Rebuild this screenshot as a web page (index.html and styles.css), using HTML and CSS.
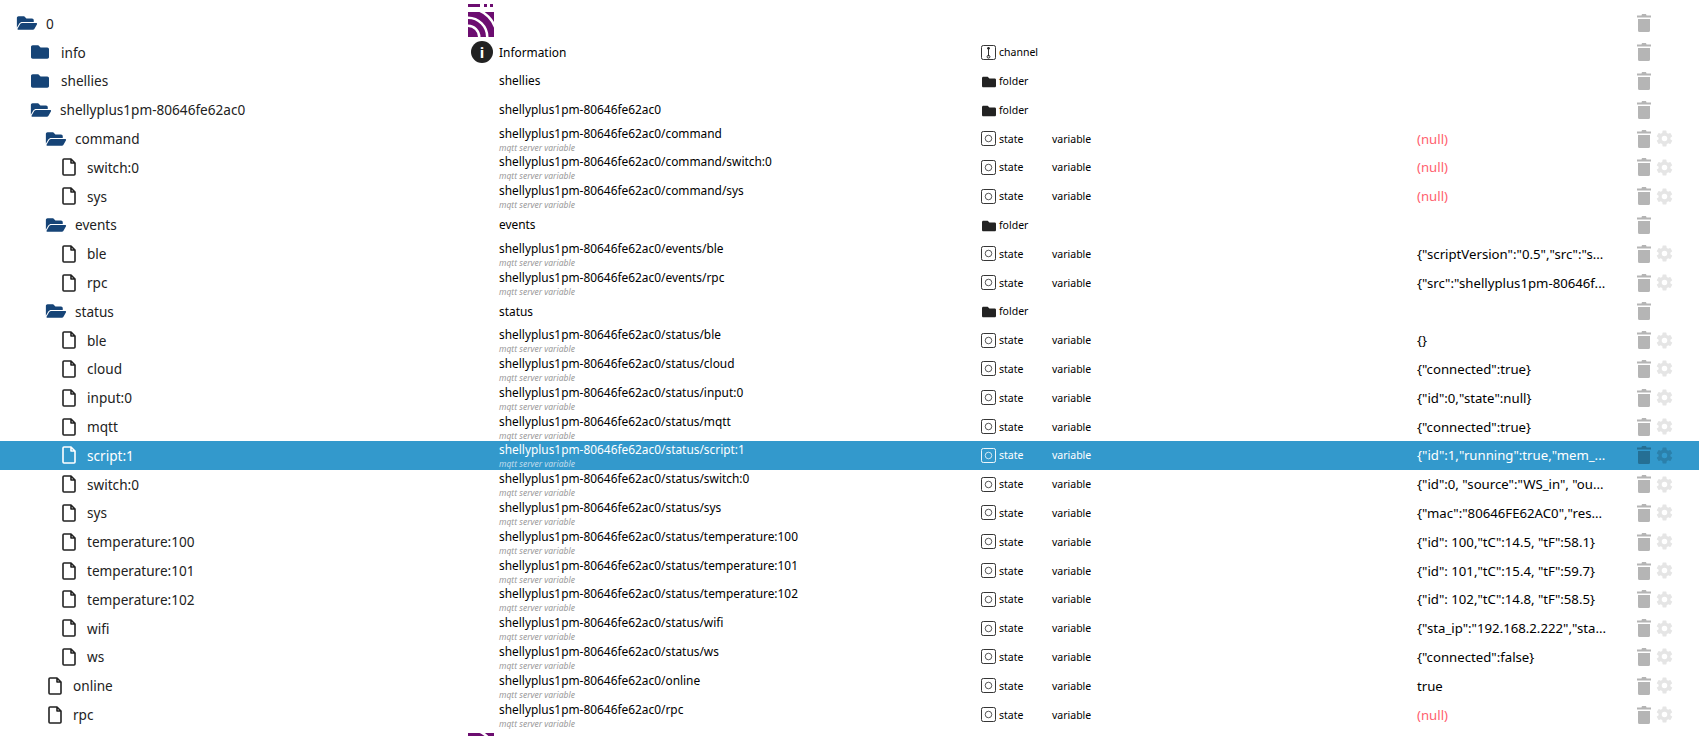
FILE: index.html
```html
<!DOCTYPE html>
<html lang="en">

<head>
    <meta charset="UTF-8">
    <meta name="viewport" content="width=device-width, initial-scale=1.0">
    <title>Objects</title>
    <link rel="stylesheet" href="styles.css">
</head>

<body>
    <svg class="defs" width="0" height="0">
        <symbol id="i-open" viewBox="0 0 576 512"><path d="M572.7 292.1l-72.4 124.1c-10.500 18-33.200 31.800-56.300 31.800H44c-20 0-32.200-21.700-22.100-39l72.400-124.100C105 266.900 127.700 256 150.800 256H548c20 0 34.800 18.800 24.700 36.100zM150.800 224H480v-48c0-26.500-21.500-48-48-48H272l-64-64H48C21.500 64 0 85.500 0 112v278l69-118.300C86.100 242.300 117.200 224 150.800 224z"/></symbol>
        <symbol id="i-closed" viewBox="0 0 512 512"><path d="M464 128H272l-64-64H48C21.500 64 0 85.500 0 112v288c0 26.500 21.500 48 48 48h416c26.500 0 48-21.500 48-48V176c0-26.500-21.500-48-48-48z"/></symbol>
        <symbol id="i-file" viewBox="0 0 14 18"><path d="M2 1h7l4 4v11a1 1 0 0 1-1 1H2a1 1 0 0 1-1-1V2a1 1 0 0 1 1-1zM9 1v4h4" fill="none" stroke="currentColor" stroke-width="1.600" stroke-linejoin="round"/></symbol>
        <symbol id="i-trash" viewBox="0 0 14 18"><path d="M5 0h4l.5 1.500H14v2H0v-2h4.500zM1 5h12v11.500a1.500 1.500 0 0 1-1.500 1.500h-9A1.500 1.500 0 0 1 1 16.500z"/></symbol>
        <symbol id="i-gear" viewBox="0 0 24 24"><path fill-rule="evenodd" d="M19.400 13c.04-.33.06-.66.06-1s-.02-.67-.06-1l2.100-1.650a.5.500 0 0 0 .12-.64l-2-3.460a.5.500 0 0 0-.61-.22l-2.490 1a7.300 7.300 0 0 0-1.690-.98l-.38-2.650A.49.490 0 0 0 14 2h-4a.49.490 0 0 0-.49.420l-.38 2.650c-.61.250-1.170.590-1.690.980l-2.490-1a.5.500 0 0 0-.61.220l-2 3.460a.5.500 0 0 0 .12.640L4.560 11c-.04.330-.06.670-.06 1s.02.670.06 1l-2.100 1.650a.5.500 0 0 0-.12.640l2 3.460c.12.220.39.300.61.220l2.490-1c.52.400 1.080.730 1.690.980l.38 2.650c.04.240.25.420.49.420h4c.24 0 .45-.18.49-.42l.38-2.650c.61-.25 1.170-.59 1.690-.98l2.490 1c.22.080.49 0 .61-.22l2-3.460a.5.500 0 0 0-.12-.64zM12 15.500a3.500 3.500 0 1 1 0-7 3.500 3.500 0 0 1 0 7z"/></symbol>
        <symbol id="i-state" viewBox="0 0 16 16"><rect x="0.500" y="0.500" width="15" height="15" rx="2" fill="none" stroke="currentColor"/><circle cx="8" cy="8" r="3.500" fill="none" stroke="currentColor" opacity="0.800"/></symbol>
        <symbol id="i-channel" viewBox="0 0 16 16"><rect x="0.500" y="0.500" width="15" height="15" rx="2" fill="none" stroke="currentColor"/><path d="M8 3v9" stroke="currentColor"/><circle cx="8" cy="3.500" r="1.400"/><circle cx="8" cy="12.500" r="1.500" fill="none" stroke="currentColor"/></symbol>
        <symbol id="i-rf" viewBox="0 0 26 34">
            <path d="M0 0h12v3H0zM16 0h3v3h-3zM22 0h3v3h-3z"/>
            <path d="M0 8h26v25H0z"/>
            <path d="M0 21.750A11.250 11.250 0 0 1 11.250 33M0 13.750A19.250 19.250 0 0 1 19.250 33M0 4.250A28.750 28.750 0 0 1 28.750 33" fill="none" stroke="#fff" stroke-width="2.500"/>
        </symbol>
    </svg>

    <div class="tree">
        <div class="row first">
            <div class="name d0"><svg class="folder open"><use href="#i-open"/></svg>0</div>
            <div class="logo"><svg class="rf"><use href="#i-rf"/></svg></div>
            <div class="title"></div>
            <div class="kind"></div>
            <div class="role"></div>
            <div class="value"></div>
            <div class="tools"><svg class="trash"><use href="#i-trash"/></svg></div>
        </div>
        <div class="row">
            <div class="name d1"><svg class="folder"><use href="#i-closed"/></svg>info</div>
            <div class="logo"><span class="info">i</span></div>
            <div class="title">Information</div>
            <div class="kind"><svg class="type"><use href="#i-channel"/></svg>channel</div>
            <div class="role"></div>
            <div class="value"></div>
            <div class="tools"><svg class="trash"><use href="#i-trash"/></svg></div>
        </div>
        <div class="row">
            <div class="name d1"><svg class="folder"><use href="#i-closed"/></svg>shellies</div>
            <div class="logo"></div>
            <div class="title">shellies</div>
            <div class="kind"><svg class="type-folder"><use href="#i-closed"/></svg>folder</div>
            <div class="role"></div>
            <div class="value"></div>
            <div class="tools"><svg class="trash"><use href="#i-trash"/></svg></div>
        </div>
        <div class="row">
            <div class="name d1"><svg class="folder open"><use href="#i-open"/></svg>shellyplus1pm-80646fe62ac0</div>
            <div class="logo"></div>
            <div class="title">shellyplus1pm-80646fe62ac0</div>
            <div class="kind"><svg class="type-folder"><use href="#i-closed"/></svg>folder</div>
            <div class="role"></div>
            <div class="value"></div>
            <div class="tools"><svg class="trash"><use href="#i-trash"/></svg></div>
        </div>
        <div class="row">
            <div class="name d2"><svg class="folder open"><use href="#i-open"/></svg>command</div>
            <div class="logo"></div>
            <div class="title">shellyplus1pm-80646fe62ac0/command<small>mqtt server variable</small></div>
            <div class="kind"><svg class="type"><use href="#i-state"/></svg>state</div>
            <div class="role">variable</div>
            <div class="value null">(null)</div>
            <div class="tools"><svg class="trash"><use href="#i-trash"/></svg><svg class="gear"><use href="#i-gear"/></svg></div>
        </div>
        <div class="row">
            <div class="name d3"><svg class="file"><use href="#i-file"/></svg>switch:0</div>
            <div class="logo"></div>
            <div class="title">shellyplus1pm-80646fe62ac0/command/switch:0<small>mqtt server variable</small></div>
            <div class="kind"><svg class="type"><use href="#i-state"/></svg>state</div>
            <div class="role">variable</div>
            <div class="value null">(null)</div>
            <div class="tools"><svg class="trash"><use href="#i-trash"/></svg><svg class="gear"><use href="#i-gear"/></svg></div>
        </div>
        <div class="row">
            <div class="name d3"><svg class="file"><use href="#i-file"/></svg>sys</div>
            <div class="logo"></div>
            <div class="title">shellyplus1pm-80646fe62ac0/command/sys<small>mqtt server variable</small></div>
            <div class="kind"><svg class="type"><use href="#i-state"/></svg>state</div>
            <div class="role">variable</div>
            <div class="value null">(null)</div>
            <div class="tools"><svg class="trash"><use href="#i-trash"/></svg><svg class="gear"><use href="#i-gear"/></svg></div>
        </div>
        <div class="row">
            <div class="name d2"><svg class="folder open"><use href="#i-open"/></svg>events</div>
            <div class="logo"></div>
            <div class="title">events</div>
            <div class="kind"><svg class="type-folder"><use href="#i-closed"/></svg>folder</div>
            <div class="role"></div>
            <div class="value"></div>
            <div class="tools"><svg class="trash"><use href="#i-trash"/></svg></div>
        </div>
        <div class="row">
            <div class="name d3"><svg class="file"><use href="#i-file"/></svg>ble</div>
            <div class="logo"></div>
            <div class="title">shellyplus1pm-80646fe62ac0/events/ble<small>mqtt server variable</small></div>
            <div class="kind"><svg class="type"><use href="#i-state"/></svg>state</div>
            <div class="role">variable</div>
            <div class="value">{"scriptVersion":"0.5","src":"s...</div>
            <div class="tools"><svg class="trash"><use href="#i-trash"/></svg><svg class="gear"><use href="#i-gear"/></svg></div>
        </div>
        <div class="row">
            <div class="name d3"><svg class="file"><use href="#i-file"/></svg>rpc</div>
            <div class="logo"></div>
            <div class="title">shellyplus1pm-80646fe62ac0/events/rpc<small>mqtt server variable</small></div>
            <div class="kind"><svg class="type"><use href="#i-state"/></svg>state</div>
            <div class="role">variable</div>
            <div class="value">{"src":"shellyplus1pm-80646f...</div>
            <div class="tools"><svg class="trash"><use href="#i-trash"/></svg><svg class="gear"><use href="#i-gear"/></svg></div>
        </div>
        <div class="row">
            <div class="name d2"><svg class="folder open"><use href="#i-open"/></svg>status</div>
            <div class="logo"></div>
            <div class="title">status</div>
            <div class="kind"><svg class="type-folder"><use href="#i-closed"/></svg>folder</div>
            <div class="role"></div>
            <div class="value"></div>
            <div class="tools"><svg class="trash"><use href="#i-trash"/></svg></div>
        </div>
        <div class="row">
            <div class="name d3"><svg class="file"><use href="#i-file"/></svg>ble</div>
            <div class="logo"></div>
            <div class="title">shellyplus1pm-80646fe62ac0/status/ble<small>mqtt server variable</small></div>
            <div class="kind"><svg class="type"><use href="#i-state"/></svg>state</div>
            <div class="role">variable</div>
            <div class="value">{}</div>
            <div class="tools"><svg class="trash"><use href="#i-trash"/></svg><svg class="gear"><use href="#i-gear"/></svg></div>
        </div>
        <div class="row">
            <div class="name d3"><svg class="file"><use href="#i-file"/></svg>cloud</div>
            <div class="logo"></div>
            <div class="title">shellyplus1pm-80646fe62ac0/status/cloud<small>mqtt server variable</small></div>
            <div class="kind"><svg class="type"><use href="#i-state"/></svg>state</div>
            <div class="role">variable</div>
            <div class="value">{"connected":true}</div>
            <div class="tools"><svg class="trash"><use href="#i-trash"/></svg><svg class="gear"><use href="#i-gear"/></svg></div>
        </div>
        <div class="row">
            <div class="name d3"><svg class="file"><use href="#i-file"/></svg>input:0</div>
            <div class="logo"></div>
            <div class="title">shellyplus1pm-80646fe62ac0/status/input:0<small>mqtt server variable</small></div>
            <div class="kind"><svg class="type"><use href="#i-state"/></svg>state</div>
            <div class="role">variable</div>
            <div class="value">{"id":0,"state":null}</div>
            <div class="tools"><svg class="trash"><use href="#i-trash"/></svg><svg class="gear"><use href="#i-gear"/></svg></div>
        </div>
        <div class="row">
            <div class="name d3"><svg class="file"><use href="#i-file"/></svg>mqtt</div>
            <div class="logo"></div>
            <div class="title">shellyplus1pm-80646fe62ac0/status/mqtt<small>mqtt server variable</small></div>
            <div class="kind"><svg class="type"><use href="#i-state"/></svg>state</div>
            <div class="role">variable</div>
            <div class="value">{"connected":true}</div>
            <div class="tools"><svg class="trash"><use href="#i-trash"/></svg><svg class="gear"><use href="#i-gear"/></svg></div>
        </div>
        <div class="row selected">
            <div class="name d3"><svg class="file"><use href="#i-file"/></svg>script:1</div>
            <div class="logo"></div>
            <div class="title">shellyplus1pm-80646fe62ac0/status/script:1<small>mqtt server variable</small></div>
            <div class="kind"><svg class="type"><use href="#i-state"/></svg>state</div>
            <div class="role">variable</div>
            <div class="value">{"id":1,"running":true,"mem_...</div>
            <div class="tools"><svg class="trash"><use href="#i-trash"/></svg><svg class="gear"><use href="#i-gear"/></svg></div>
        </div>
        <div class="row">
            <div class="name d3"><svg class="file"><use href="#i-file"/></svg>switch:0</div>
            <div class="logo"></div>
            <div class="title">shellyplus1pm-80646fe62ac0/status/switch:0<small>mqtt server variable</small></div>
            <div class="kind"><svg class="type"><use href="#i-state"/></svg>state</div>
            <div class="role">variable</div>
            <div class="value">{"id":0, "source":"WS_in", "ou...</div>
            <div class="tools"><svg class="trash"><use href="#i-trash"/></svg><svg class="gear"><use href="#i-gear"/></svg></div>
        </div>
        <div class="row">
            <div class="name d3"><svg class="file"><use href="#i-file"/></svg>sys</div>
            <div class="logo"></div>
            <div class="title">shellyplus1pm-80646fe62ac0/status/sys<small>mqtt server variable</small></div>
            <div class="kind"><svg class="type"><use href="#i-state"/></svg>state</div>
            <div class="role">variable</div>
            <div class="value">{"mac":"80646FE62AC0","res...</div>
            <div class="tools"><svg class="trash"><use href="#i-trash"/></svg><svg class="gear"><use href="#i-gear"/></svg></div>
        </div>
        <div class="row">
            <div class="name d3"><svg class="file"><use href="#i-file"/></svg>temperature:100</div>
            <div class="logo"></div>
            <div class="title">shellyplus1pm-80646fe62ac0/status/temperature:100<small>mqtt server variable</small></div>
            <div class="kind"><svg class="type"><use href="#i-state"/></svg>state</div>
            <div class="role">variable</div>
            <div class="value">{"id": 100,"tC":14.5, "tF":58.1}</div>
            <div class="tools"><svg class="trash"><use href="#i-trash"/></svg><svg class="gear"><use href="#i-gear"/></svg></div>
        </div>
        <div class="row">
            <div class="name d3"><svg class="file"><use href="#i-file"/></svg>temperature:101</div>
            <div class="logo"></div>
            <div class="title">shellyplus1pm-80646fe62ac0/status/temperature:101<small>mqtt server variable</small></div>
            <div class="kind"><svg class="type"><use href="#i-state"/></svg>state</div>
            <div class="role">variable</div>
            <div class="value">{"id": 101,"tC":15.4, "tF":59.7}</div>
            <div class="tools"><svg class="trash"><use href="#i-trash"/></svg><svg class="gear"><use href="#i-gear"/></svg></div>
        </div>
        <div class="row">
            <div class="name d3"><svg class="file"><use href="#i-file"/></svg>temperature:102</div>
            <div class="logo"></div>
            <div class="title">shellyplus1pm-80646fe62ac0/status/temperature:102<small>mqtt server variable</small></div>
            <div class="kind"><svg class="type"><use href="#i-state"/></svg>state</div>
            <div class="role">variable</div>
            <div class="value">{"id": 102,"tC":14.8, "tF":58.5}</div>
            <div class="tools"><svg class="trash"><use href="#i-trash"/></svg><svg class="gear"><use href="#i-gear"/></svg></div>
        </div>
        <div class="row">
            <div class="name d3"><svg class="file"><use href="#i-file"/></svg>wifi</div>
            <div class="logo"></div>
            <div class="title">shellyplus1pm-80646fe62ac0/status/wifi<small>mqtt server variable</small></div>
            <div class="kind"><svg class="type"><use href="#i-state"/></svg>state</div>
            <div class="role">variable</div>
            <div class="value">{"sta_ip":"192.168.2.222","sta...</div>
            <div class="tools"><svg class="trash"><use href="#i-trash"/></svg><svg class="gear"><use href="#i-gear"/></svg></div>
        </div>
        <div class="row">
            <div class="name d3"><svg class="file"><use href="#i-file"/></svg>ws</div>
            <div class="logo"></div>
            <div class="title">shellyplus1pm-80646fe62ac0/status/ws<small>mqtt server variable</small></div>
            <div class="kind"><svg class="type"><use href="#i-state"/></svg>state</div>
            <div class="role">variable</div>
            <div class="value">{"connected":false}</div>
            <div class="tools"><svg class="trash"><use href="#i-trash"/></svg><svg class="gear"><use href="#i-gear"/></svg></div>
        </div>
        <div class="row">
            <div class="name d2f"><svg class="file"><use href="#i-file"/></svg>online</div>
            <div class="logo"></div>
            <div class="title">shellyplus1pm-80646fe62ac0/online<small>mqtt server variable</small></div>
            <div class="kind"><svg class="type"><use href="#i-state"/></svg>state</div>
            <div class="role">variable</div>
            <div class="value">true</div>
            <div class="tools"><svg class="trash"><use href="#i-trash"/></svg><svg class="gear"><use href="#i-gear"/></svg></div>
        </div>
        <div class="row">
            <div class="name d2f"><svg class="file"><use href="#i-file"/></svg>rpc</div>
            <div class="logo"></div>
            <div class="title">shellyplus1pm-80646fe62ac0/rpc<small>mqtt server variable</small></div>
            <div class="kind"><svg class="type"><use href="#i-state"/></svg>state</div>
            <div class="role">variable</div>
            <div class="value null">(null)</div>
            <div class="tools"><svg class="trash"><use href="#i-trash"/></svg><svg class="gear"><use href="#i-gear"/></svg></div>
        </div>
        <div class="row next">
            <div class="logo"><svg class="rf"><use href="#i-rf"/></svg></div>
        </div>
    </div>
</body>

</html>
```

FILE: styles.css
```css
html,
body {
    height: 100%;
}

body {
    margin: 0;
    overflow: hidden;
    background-color: #ffffff;
    color: #000000;
    font-family: "Noto Sans", sans-serif;
}

.defs {
    position: absolute;
}

.tree {
    padding-top: 9px;
}

.row {
    display: flex;
    align-items: center;
    height: 28.8px;
}

.row.selected {
    background-color: #3399cc;
    color: #ffffff;
}

.name {
    display: flex;
    align-items: center;
    width: 468px;
    box-sizing: border-box;
    font-size: 13.6px;
    color: #222;
}

.selected .name {
    color: #fff;
}

.d0 { padding-left: 16px; }
.d1 { padding-left: 30px; }
.d2 { padding-left: 45px; }
.d3 { padding-left: 62px; }
.d2f { padding-left: 48px; }

.folder {
    width: 20px;
    height: 18px;
    margin-right: 11px;
    fill: #164477;
}

.folder.open {
    width: 22px;
    margin-right: 8px;
}

.file {
    width: 14px;
    height: 18px;
    margin-right: 11px;
    color: #222;
}

.selected .file {
    color: #fff;
}

.logo {
    display: flex;
    align-items: center;
    justify-content: flex-start;
    width: 31px;
    height: 100%;
}

.rf {
    flex: none;
    width: 26px;
    height: 34px;
    margin-top: -5px;
    fill: #6c0d70;
}

.info {
    display: flex;
    align-items: center;
    justify-content: center;
    width: 22px;
    height: 22px;
    margin-left: 3px;
    border-radius: 50%;
    background-color: #222;
    color: #fff;
    font-size: 15px;
    font-weight: 700;
}

.title {
    width: 482px;
    font-size: 11.9px;
    line-height: 15px;
}

.title small {
    display: block;
    height: 8px;
    margin-top: 3px;
    font-size: 8.5px;
    line-height: 8px;
    font-style: italic;
    color: #999;
}

.selected .title small {
    color: #c0dcec;
}

.kind {
    display: flex;
    align-items: center;
    width: 71px;
    font-size: 10.5px;
}

.type {
    width: 15px;
    height: 15px;
    margin-right: 3px;
    fill: #222;
    color: #222;
}

.selected .type {
    fill: #fff;
    color: #fff;
}

.type-folder {
    width: 14px;
    height: 14px;
    margin: 2px 3px 0 1px;
    fill: #222;
}

.role {
    width: 365px;
    font-size: 10.5px;
}

.value {
    width: 220px;
    font-size: 13.2px;
    white-space: nowrap;
}

.null {
    color: #ff5e6e;
}

.tools {
    display: flex;
    align-items: center;
    gap: 4px;
}

.trash {
    width: 14px;
    height: 18px;
    fill: #b5b5b5;
}

.gear {
    width: 19px;
    height: 19px;
    fill: #e5e5e5;
}

.selected .trash {
    fill: #256f94;
}

.selected .gear {
    fill: #2b80ab;
}

.next {
    height: 7px;
    overflow: hidden;
    align-items: flex-start;
}

.next .logo {
    align-items: flex-start;
    margin-left: 468px;
}

.next .rf {
    margin-top: -4px;
}
```
